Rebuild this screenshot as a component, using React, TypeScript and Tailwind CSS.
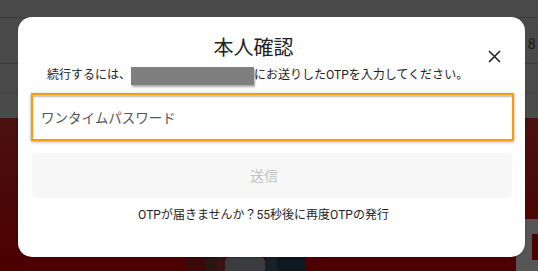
import React from "react";

export default function App() {
  const font = { fontFamily: 'Roboto, "Noto Sans CJK JP", "Noto Sans", sans-serif' };
  return (
    <div
      className="relative w-[538px] h-[271px] overflow-hidden bg-[#4a4a4a] flex flex-col"
      style={font}
    >
      {/* background page (dimmed) */}
      <div className="h-[18px] border-b border-[#3c3c3c]" />
      <div className="h-[46px] border-b border-[#3c3c3c] flex justify-end items-start pt-[17px]">
        <span className="text-[14px] leading-[18px] text-[#1a1a1a] mr-[-6px]">8 (</span>
      </div>
      <div className="h-[29px] border-b border-[#424242]" />
      <div className="h-[25px]" />
      <div className="flex-1 bg-gradient-to-b from-[#4a1010] to-[#4c0000] flex">
        <div className="flex-1" />
        <div className="flex flex-col justify-end">
          <div className="w-[22px] h-[66px] mb-[-14px] rounded-tl-[10px] rounded-bl-[10px] bg-[#555555] flex items-center justify-end pb-[10px]">
            <div className="w-[6px] h-[26px] bg-[#4c0000]" />
          </div>
        </div>
      </div>
      {/* bottom strip image pieces */}
      <div className="absolute left-[185px] top-[256px] w-[120px] h-[15px] flex">
        <div className="w-[20px] bg-[#3a0a0a]" />
        <div className="w-[12px] bg-[#2a1414]" />
        <div className="w-[8px] bg-[#3c1010]" />
        <div className="w-[40px] bg-[#3a3c40] rounded-t-[6px]" />
        <div className="w-[12px] bg-[#1a2028]" />
        <div className="w-[28px] bg-[#0e1820]" />
      </div>

      {/* modal */}
      <div className="absolute left-[18px] top-[17px] w-[507px] h-[240px] rounded-[14px] bg-white shadow-[0_1px_2px_rgba(0,0,0,0.25)] px-[13px] flex flex-col">
        <div className="flex mt-[17px] h-[28px]">
          <div className="flex-1 text-center text-[20px] leading-[28px] text-[#222222]">本人確認</div>
          <button className="w-[36px] h-[28px] mt-[8px] flex items-center justify-center text-[#222222]">
            <svg width="13" height="13" viewBox="0 0 13 13" fill="none" stroke="currentColor" strokeWidth="1.6">
              <path d="M1 1L12 12M12 1L1 12" />
            </svg>
          </button>
        </div>
        <div className="mt-[4px] pl-[16px] text-[12px] leading-[18px] text-[#222222] whitespace-nowrap">
          続行するには、
          <span className="inline-block w-[123px] h-[18px] bg-[#7f7f7f] align-[-6px] shadow-[1px_2px_2px_rgba(0,0,0,0.35)]" />
          にお送りしたOTPを入力してください。
        </div>
        <div className="mt-[8px] -mr-[2px] h-[48px] border-[2.5px] border-[#ff9a00] shadow-[0_1px_3px_rgba(0,0,0,0.35)] bg-white flex">
          <div className="flex-1 border-t-[2px] border-[#c9cdd2] shadow-[inset_0_1px_1px_rgba(0,0,0,0.08)] flex items-center pl-[8px]">
            <span className="text-[13.5px] leading-[20px] text-[#555555]">ワンタイムパスワード</span>
          </div>
        </div>
        <div className="mt-[12px] ml-[1px] h-[45px] rounded-[4px] bg-[#f7f7f7] flex items-center justify-center pr-[16px]">
          <span className="text-[14px] leading-[20px] text-[#c2c2c2]">送信</span>
        </div>
        <div className="mt-[8px] text-center pr-[16px] text-[12px] leading-[18px] text-[#222222]">
          OTPが届きませんか？55秒後に再度OTPの発行
        </div>
      </div>
    </div>
  );
}
